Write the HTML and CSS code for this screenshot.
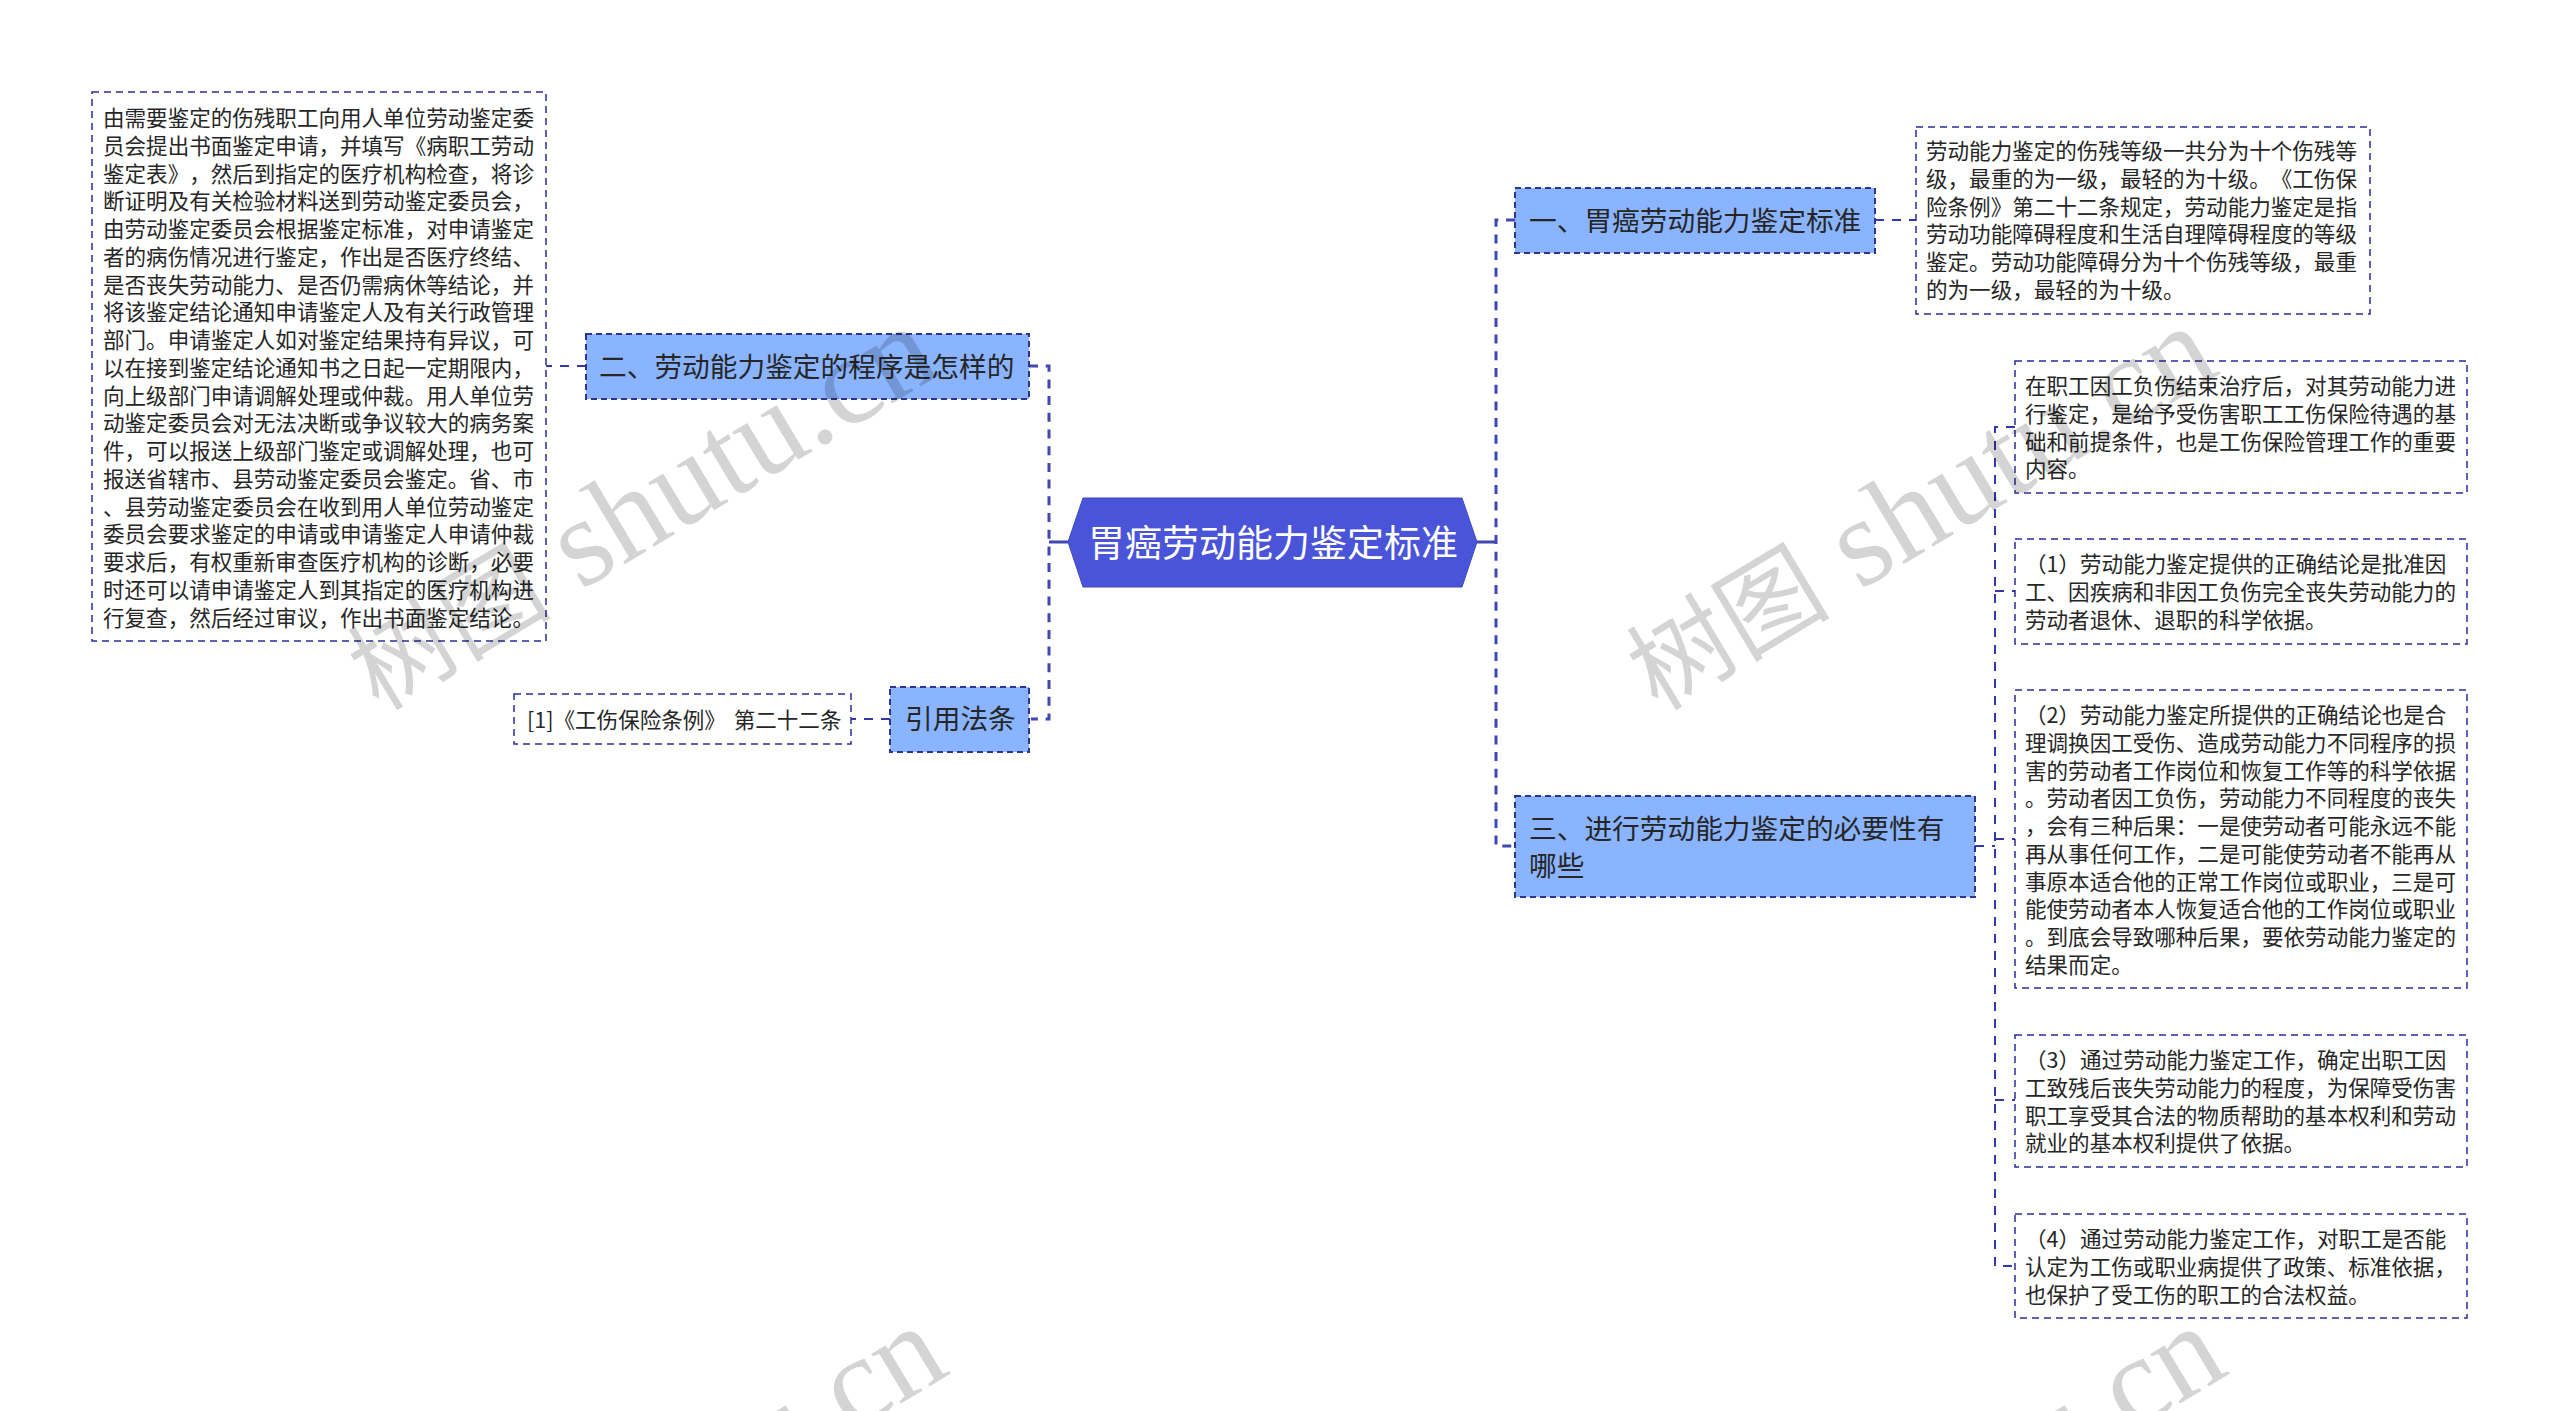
FILE: index.html
```html
<!DOCTYPE html>
<html lang="zh-CN">
<head>
<meta charset="utf-8">
<title>胃癌劳动能力鉴定标准</title>
<link rel="stylesheet" href="styles.css">
</head>
<body>
<main class="canvas">
<svg class="wires" width="2560" height="1411" viewBox="0 0 2560 1411">
  <polygon class="root-shape" points="1083,498 1462,498 1477,542 1462,587 1083,587 1068,542"/>
  <rect class="branch-fill" x="586" y="334" width="443" height="65"/>
  <rect class="branch-fill" x="890" y="687" width="139" height="65"/>
  <rect class="branch-fill" x="1515" y="188" width="360" height="65"/>
  <rect class="branch-fill" x="1515" y="796" width="460" height="101"/>
  <path class="wire-root" d="M1068 542H1049M1477 542H1496"/>
  <path class="trunk" d="M1029 366H1049V719H1031"/>
  <path class="trunk" d="M1515 220H1496V846H1515"/>
  <path class="wire" d="M586 366H546M890 719H851M1875 220H1916"/>
  <path class="wire" d="M1975 846H1995M2015 427H1995V1266H2015M1995 591H2015M1995 839H2015M1995 1100H2015"/>
  <rect class="edge-branch" x="586" y="334" width="443" height="65"/>
  <rect class="edge-branch" x="890" y="687" width="139" height="65"/>
  <rect class="edge-branch" x="1515" y="188" width="360" height="65"/>
  <rect class="edge-branch" x="1515" y="796" width="460" height="101"/>
  <rect class="edge-leaf" x="92" y="92" width="454" height="549"/>
  <rect class="edge-leaf" x="514" y="694" width="337" height="50"/>
  <rect class="edge-leaf" x="1916" y="127" width="454" height="187"/>
  <rect class="edge-leaf" x="2015" y="361" width="452" height="132"/>
  <rect class="edge-leaf" x="2015" y="539" width="452" height="105"/>
  <rect class="edge-leaf" x="2015" y="690" width="452" height="298"/>
  <rect class="edge-leaf" x="2015" y="1035" width="452" height="132"/>
  <rect class="edge-leaf" x="2015" y="1214" width="452" height="104"/>
</svg>

<h1 class="node root n-root">胃癌劳动能力鉴定标准</h1>
<div class="node branch n-b2">二、劳动能力鉴定的程序是怎样的</div>
<div class="node branch n-cite">引用法条</div>
<div class="node branch n-b1">一、胃癌劳动能力鉴定标准</div>
<div class="node branch n-b3">三、进行劳动能力鉴定的必要性有<br>哪些</div>

<p class="node leaf n-l1">由需要鉴定的伤残职工向用人单位劳动鉴定委<br>员会提出书面鉴定申请，并填写《病职工劳动<br>鉴定表》，然后到指定的医疗机构检查，将诊<br>断证明及有关检验材料送到劳动鉴定委员会，<br>由劳动鉴定委员会根据鉴定标准，对申请鉴定<br>者的病伤情况进行鉴定，作出是否医疗终结、<br>是否丧失劳动能力、是否仍需病休等结论，并<br>将该鉴定结论通知申请鉴定人及有关行政管理<br>部门。申请鉴定人如对鉴定结果持有异议，可<br>以在接到鉴定结论通知书之日起一定期限内，<br>向上级部门申请调解处理或仲裁。用人单位劳<br>动鉴定委员会对无法决断或争议较大的病务案<br>件，可以报送上级部门鉴定或调解处理，也可<br>报送省辖市、县劳动鉴定委员会鉴定。省、市<br>、县劳动鉴定委员会在收到用人单位劳动鉴定<br>委员会要求鉴定的申请或申请鉴定人申请仲裁<br>要求后，有权重新审查医疗机构的诊断，必要<br>时还可以请申请鉴定人到其指定的医疗机构进<br>行复查，然后经过审议，作出书面鉴定结论。</p>
<p class="node leaf n-l2">[1]《工伤保险条例》 第二十二条</p>
<p class="node leaf n-r1">劳动能力鉴定的伤残等级一共分为十个伤残等<br>级，最重的为一级，最轻的为十级。《工伤保<br>险条例》第二十二条规定，劳动能力鉴定是指<br>劳动功能障碍程度和生活自理障碍程度的等级<br>鉴定。劳动功能障碍分为十个伤残等级，最重<br>的为一级，最轻的为十级。</p>
<p class="node leaf n-r2">在职工因工负伤结束治疗后，对其劳动能力进<br>行鉴定，是给予受伤害职工工伤保险待遇的基<br>础和前提条件，也是工伤保险管理工作的重要<br>内容。</p>
<p class="node leaf n-r3">（1）劳动能力鉴定提供的正确结论是批准因<br>工、因疾病和非因工负伤完全丧失劳动能力的<br>劳动者退休、退职的科学依据。</p>
<p class="node leaf n-r4">（2）劳动能力鉴定所提供的正确结论也是合<br>理调换因工受伤、造成劳动能力不同程序的损<br>害的劳动者工作岗位和恢复工作等的科学依据<br>。劳动者因工负伤，劳动能力不同程度的丧失<br>，会有三种后果：一是使劳动者可能永远不能<br>再从事任何工作，二是可能使劳动者不能再从<br>事原本适合他的正常工作岗位或职业，三是可<br>能使劳动者本人恢复适合他的工作岗位或职业<br>。到底会导致哪种后果，要依劳动能力鉴定的<br>结果而定。</p>
<p class="node leaf n-r5">（3）通过劳动能力鉴定工作，确定出职工因<br>工致残后丧失劳动能力的程度，为保障受伤害<br>职工享受其合法的物质帮助的基本权利和劳动<br>就业的基本权利提供了依据。</p>
<p class="node leaf n-r6">（4）通过劳动能力鉴定工作，对职工是否能<br>认定为工伤或职业病提供了政策、标准依据，<br>也保护了受工伤的职工的合法权益。</p>

<div class="mark m1"><span class="mark-cjk">树图</span> shutu.cn</div>
<div class="mark m2"><span class="mark-cjk">树图</span> shutu.cn</div>
<div class="mark m3"><span class="mark-cjk">树图</span> shutu.cn</div>
<div class="mark m4"><span class="mark-cjk">树图</span> shutu.cn</div>
</main>
</body>
</html>
```
FILE: styles.css
```css
* { box-sizing: border-box; }
html, body { margin: 0; padding: 0; background: #fff; }
.canvas {
  position: relative;
  width: 2560px;
  height: 1411px;
  overflow: hidden;
  font-family: "Noto Sans CJK SC", "Noto Sans", sans-serif;
  text-spacing-trim: space-all;
  font-kerning: none;
}
.wires { position: absolute; left: 0; top: 0; }
.root-shape { fill: #4a54d8; stroke: #3f49c0; stroke-width: 1; }
.branch-fill { fill: #8ab4ff; }
.wire-root { fill: none; stroke: #3f47b0; stroke-width: 3; }
.trunk { fill: none; stroke: #3f47b0; stroke-width: 3; stroke-dasharray: 9 7.7; }
.wire { fill: none; stroke: #3438a8; stroke-width: 2; stroke-dasharray: 9 8; }
.edge-branch { fill: none; stroke: #2f3494; stroke-width: 2; stroke-dasharray: 6 4; }
.edge-leaf { fill: none; stroke: #2a2e96; stroke-width: 1.5; stroke-dasharray: 7 5; }

.node { position: absolute; margin: 0; white-space: nowrap; font-weight: 400; }
.root { color: #fff; font-size: 37px; line-height: 50px; }
.branch { color: #262626; font-size: 27.7px; line-height: 37px; }
.leaf { color: #262626; font-size: 21.55px; line-height: 27.75px; }

.n-root { left: 1088px; top: 516px; }
.n-b2 { left: 599px; top: 347px; }
.n-cite { left: 905px; top: 699px; }
.n-b1 { left: 1529px; top: 201px; }
.n-b3 { left: 1529px; top: 809px; }
.n-l1 { left: 103px; top: 103px; }
.n-l2 { left: 527px; top: 705px; word-spacing: 3px; }
.n-r1 { left: 1926px; top: 136px; }
.n-r2 { left: 2025px; top: 371px; }
.n-r3 { left: 2025px; top: 549px; }
.n-r4 { left: 2025px; top: 700px; }
.n-r5 { left: 2025px; top: 1045px; }
.n-r6 { left: 2025px; top: 1224px; }

.mark {
  position: absolute;
  white-space: nowrap;
  font-family: "Liberation Serif", "Noto Sans CJK SC", serif;
  font-size: 126px;
  line-height: 1;
  color: rgba(0, 0, 0, 0.17);
  transform: rotate(-31deg);
  transform-origin: left center;
  pointer-events: none;
}
.mark-cjk { font-size: 102px; font-weight: 400; }
.m1 { left: 357px; top: 613px; }
.m2 { left: 1636px; top: 613px; }
.m3 { left: 366px; top: 1613px; }
.m4 { left: 1645px; top: 1613px; }
```
